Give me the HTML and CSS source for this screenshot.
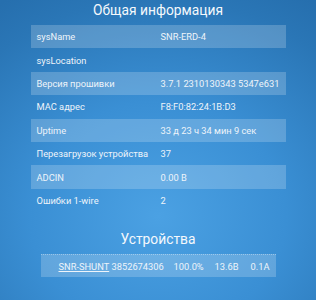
FILE: index.html
```html
<!DOCTYPE html>
<html>
<head>
<meta charset="utf-8">
<link rel="stylesheet" href="styles.css">
</head>
<body>
<div class="page">
  <h1 class="title">Общая информация</h1>
  <table class="info">
    <tr class="odd"><td class="k">sysName</td><td class="v">SNR-ERD-4</td></tr>
    <tr><td class="k">sysLocation</td><td class="v"></td></tr>
    <tr class="odd"><td class="k">Версия прошивки</td><td class="v">3.7.1 2310130343 5347e631</td></tr>
    <tr><td class="k">MAC адрес</td><td class="v">F8:F0:82:24:1B:D3</td></tr>
    <tr class="odd"><td class="k">Uptime</td><td class="v">33 д 23 ч 34 мин 9 сек</td></tr>
    <tr><td class="k">Перезагрузок устройства</td><td class="v">37</td></tr>
    <tr class="odd"><td class="k">ADCIN</td><td class="v">0.00 В</td></tr>
    <tr><td class="k">Ошибки 1-wire</td><td class="v">2</td></tr>
  </table>
  <h2 class="title2">Устройства</h2>
  <div class="dev">
    <a class="d-name" href="#">SNR-SHUNT</a>
    <span class="d-id">3852674306</span>
    <span class="d-p">100.0%</span>
    <span class="d-u">13.6B</span>
    <span class="d-i">0.1A</span>
  </div>
</div>
</body>
</html>
```
FILE: styles.css
```css
html, body {
  margin: 0;
  padding: 0;
  height: 100%;
}
body {
  background: radial-gradient(ellipse 90% 85% at 50% 72%, #4ba1e3 0%, #3a8fd4 45%, #2a76b6 85%, #266fae 100%);
  font-family: Roboto, "Open Sans", sans-serif;
  color: #eef4fa;
  font-size: 9.3px;
}
.page {
  display: flex;
  flex-direction: column;
  align-items: center;
}
.title {
  margin: 0;
  font-family: Roboto, sans-serif;
  font-weight: 400;
  font-size: 13.8px;
  line-height: 21px;
  height: 25px;
  color: #f4f8fc;
}
.info {
  width: 255px;
  border-collapse: collapse;
  table-layout: fixed;
}
.info td {
  height: 23.4px;
  padding: 0 6px;
  box-sizing: border-box;
  white-space: nowrap;
}
.info .k {
  width: 124px;
}
.info tr.odd td {
  background: rgba(255, 255, 255, 0.2);
}
.title2 {
  margin: 16px 0 0;
  font-family: Roboto, sans-serif;
  font-weight: 400;
  font-size: 13.8px;
  line-height: 22px;
  height: 26px;
  color: #f4f8fc;
}
.dev {
  width: 235px;
  height: 23px;
  box-sizing: border-box;
  display: grid;
  grid-template-columns: 53px 62px 41px 36px 1fr;
  align-items: center;
  padding-left: 18px;
  background: rgba(255, 255, 255, 0.2);
  border-top: 1px dotted rgba(255, 255, 255, 0.35);
  white-space: nowrap;
}
.dev .d-name {
  color: #eef4fa;
  text-decoration: underline;
}
```
